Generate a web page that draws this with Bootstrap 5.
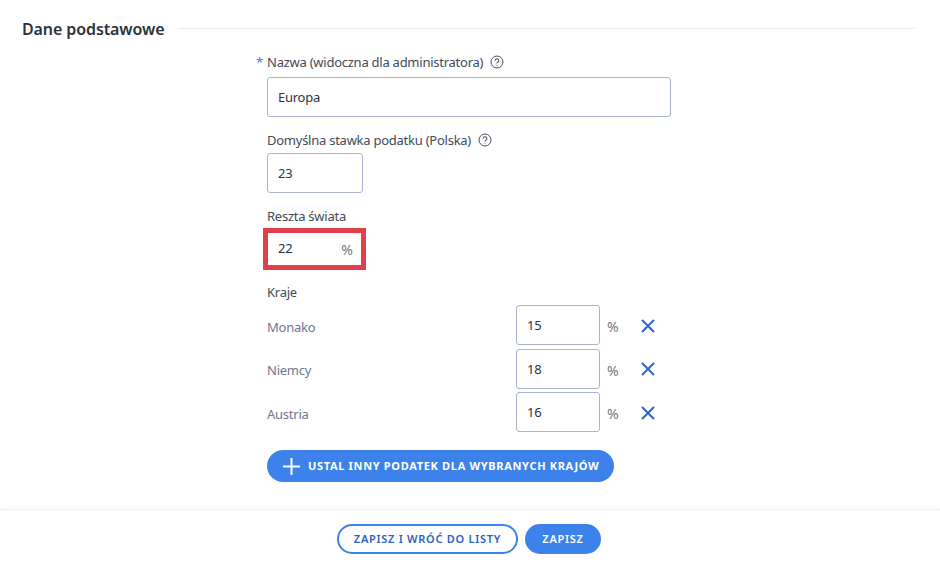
<!DOCTYPE html>
<html lang="pl">
<head>
<meta charset="utf-8">
<title>Dane podstawowe</title>
<link href="https://cdn.jsdelivr.net/npm/bootstrap@5.3.0/dist/css/bootstrap.min.css" rel="stylesheet">
<style>
html,body{height:567px;overflow:hidden;background:#fff}
body{font-family:"Noto Sans","Open Sans",sans-serif;font-size:13px;letter-spacing:-.25px;color:#3f4754}
.sheet{height:509px;padding:19px 25px 0 22px}
.sect-title{font-size:16px;font-weight:600;color:#2b3340;line-height:20px;margin:0;letter-spacing:-.1px}
.sect-rule{height:1px;background:#e9ebee;margin-left:14px;margin-top:-2px}
.form-col{width:404px;margin-left:245px}
.lbl{line-height:18px;height:18px;color:#424a57;white-space:nowrap;margin-top:14px}
.lbl-tight{margin-top:13px}
.star{color:#3d82ea;position:absolute;margin-left:-11px}
.qmark{width:14px;height:14px;margin-left:4px;vertical-align:-2px}
.fld{border:1px solid #aab4cf;border-radius:3px;height:40px;padding:0 10px;display:flex;align-items:center;color:#2b3340;background:#fff;font-size:13px;letter-spacing:-.25px}
.fld:focus{box-shadow:none;border-color:#aab4cf}
.name-fld{margin-top:6px}
.rate-fld{width:96px;margin-top:4px}
.alert-box{width:103px;height:42px;border:5px solid #e0404a;margin-left:-4px;margin-top:3px;display:flex;align-items:center;justify-content:space-between;padding:0 8px 0 10px;color:#2b3340}
.pct{color:#6f7785;font-size:14px;letter-spacing:0}
.c-row{margin-top:3.5px}
.c-row-first{margin-top:4px}
.c-name{width:249px;color:#6e7690;padding-top:5px}
.c-fld{width:84px}
.c-pct{width:41px;padding-left:7px;padding-top:3px}
.c-x{margin-top:1px}
.add-btn{background:#3d82ea;color:#fff;border:0;border-radius:16px;height:32px;width:347px;padding:0 0 0 16px;font-size:11px;font-weight:700;letter-spacing:.67px;margin-top:18px;white-space:nowrap}
.add-btn:hover{background:#3d82ea;color:#fff}
.foot{height:58px;border-top:1px solid #f0f0f0;box-shadow:0 -2px 3px rgba(0,0,0,.03);padding:14px 2px 0 0}
.pill-out,.pill-fill{height:30px;border-radius:15px;font-size:11px;font-weight:600;letter-spacing:.72px;padding:0;display:flex;align-items:center;justify-content:center}
.pill-out{width:181px;border:2px solid #3d82ea;color:#2f5fc4;background:#fff}
.pill-fill{width:76px;border:0;background:#3d82ea;color:#fff}
.foot-gap{gap:7px}
</style>
</head>
<body>
<main class="sheet">
  <div class="d-flex align-items-center">
    <h2 class="sect-title">Dane podstawowe</h2>
    <div class="sect-rule flex-grow-1"></div>
  </div>
  <form class="form-col">
    <div class="lbl"><span class="star">*</span>Nazwa (widoczna dla administratora)
      <svg class="qmark" viewBox="0 0 14 14" fill="none" stroke="#4a5260"><circle cx="7" cy="7" r="6"/><path d="M5.2 5.6a1.8 1.8 0 1 1 2.7 1.5c-.6.4-.9.7-.9 1.4" stroke-width="1.1"/><circle cx="7" cy="10.3" r=".5" fill="#4a5260" stroke="none"/></svg>
    </div>
    <input class="form-control fld name-fld" value="Europa">
    <div class="lbl">Domyślna stawka podatku (Polska)
      <svg class="qmark" viewBox="0 0 14 14" fill="none" stroke="#4a5260"><circle cx="7" cy="7" r="6"/><path d="M5.2 5.6a1.8 1.8 0 1 1 2.7 1.5c-.6.4-.9.7-.9 1.4" stroke-width="1.1"/><circle cx="7" cy="10.3" r=".5" fill="#4a5260" stroke="none"/></svg>
    </div>
    <input class="form-control fld rate-fld" value="23">
    <div class="lbl">Reszta świata</div>
    <div class="alert-box"><span>22</span><span class="pct">%</span></div>
    <div class="lbl lbl-tight">Kraje</div>
    <div class="d-flex align-items-center c-row-first">
      <span class="c-name">Monako</span><input class="form-control fld c-fld" value="15"><span class="c-pct pct">%</span>
      <svg class="c-x" width="14" height="14" viewBox="0 0 14 14" stroke="#2f66c8" stroke-width="2"><path d="M1 1l12 12M13 1L1 13"/></svg>
    </div>
    <div class="d-flex align-items-center c-row">
      <span class="c-name">Niemcy</span><input class="form-control fld c-fld" value="18"><span class="c-pct pct">%</span>
      <svg class="c-x" width="14" height="14" viewBox="0 0 14 14" stroke="#2f66c8" stroke-width="2"><path d="M1 1l12 12M13 1L1 13"/></svg>
    </div>
    <div class="d-flex align-items-center c-row">
      <span class="c-name">Austria</span><input class="form-control fld c-fld" value="16"><span class="c-pct pct">%</span>
      <svg class="c-x" width="14" height="14" viewBox="0 0 14 14" stroke="#2f66c8" stroke-width="2"><path d="M1 1l12 12M13 1L1 13"/></svg>
    </div>
    <button type="button" class="btn add-btn d-flex align-items-center">
      <svg class="me-2" width="17" height="17" viewBox="0 0 17 17" stroke="#fff" stroke-width="2"><path d="M8.5 0v17M0 8.5h17"/></svg>
      USTAL INNY PODATEK DLA WYBRANYCH KRAJÓW
    </button>
  </form>
</main>
<footer class="foot d-flex justify-content-center foot-gap">
  <button type="button" class="btn pill-out">ZAPISZ I WRÓĆ DO LISTY</button>
  <button type="button" class="btn pill-fill">ZAPISZ</button>
</footer>
<script src="https://cdn.jsdelivr.net/npm/bootstrap@5.3.0/dist/js/bootstrap.bundle.min.js"></script>
</body>
</html>
